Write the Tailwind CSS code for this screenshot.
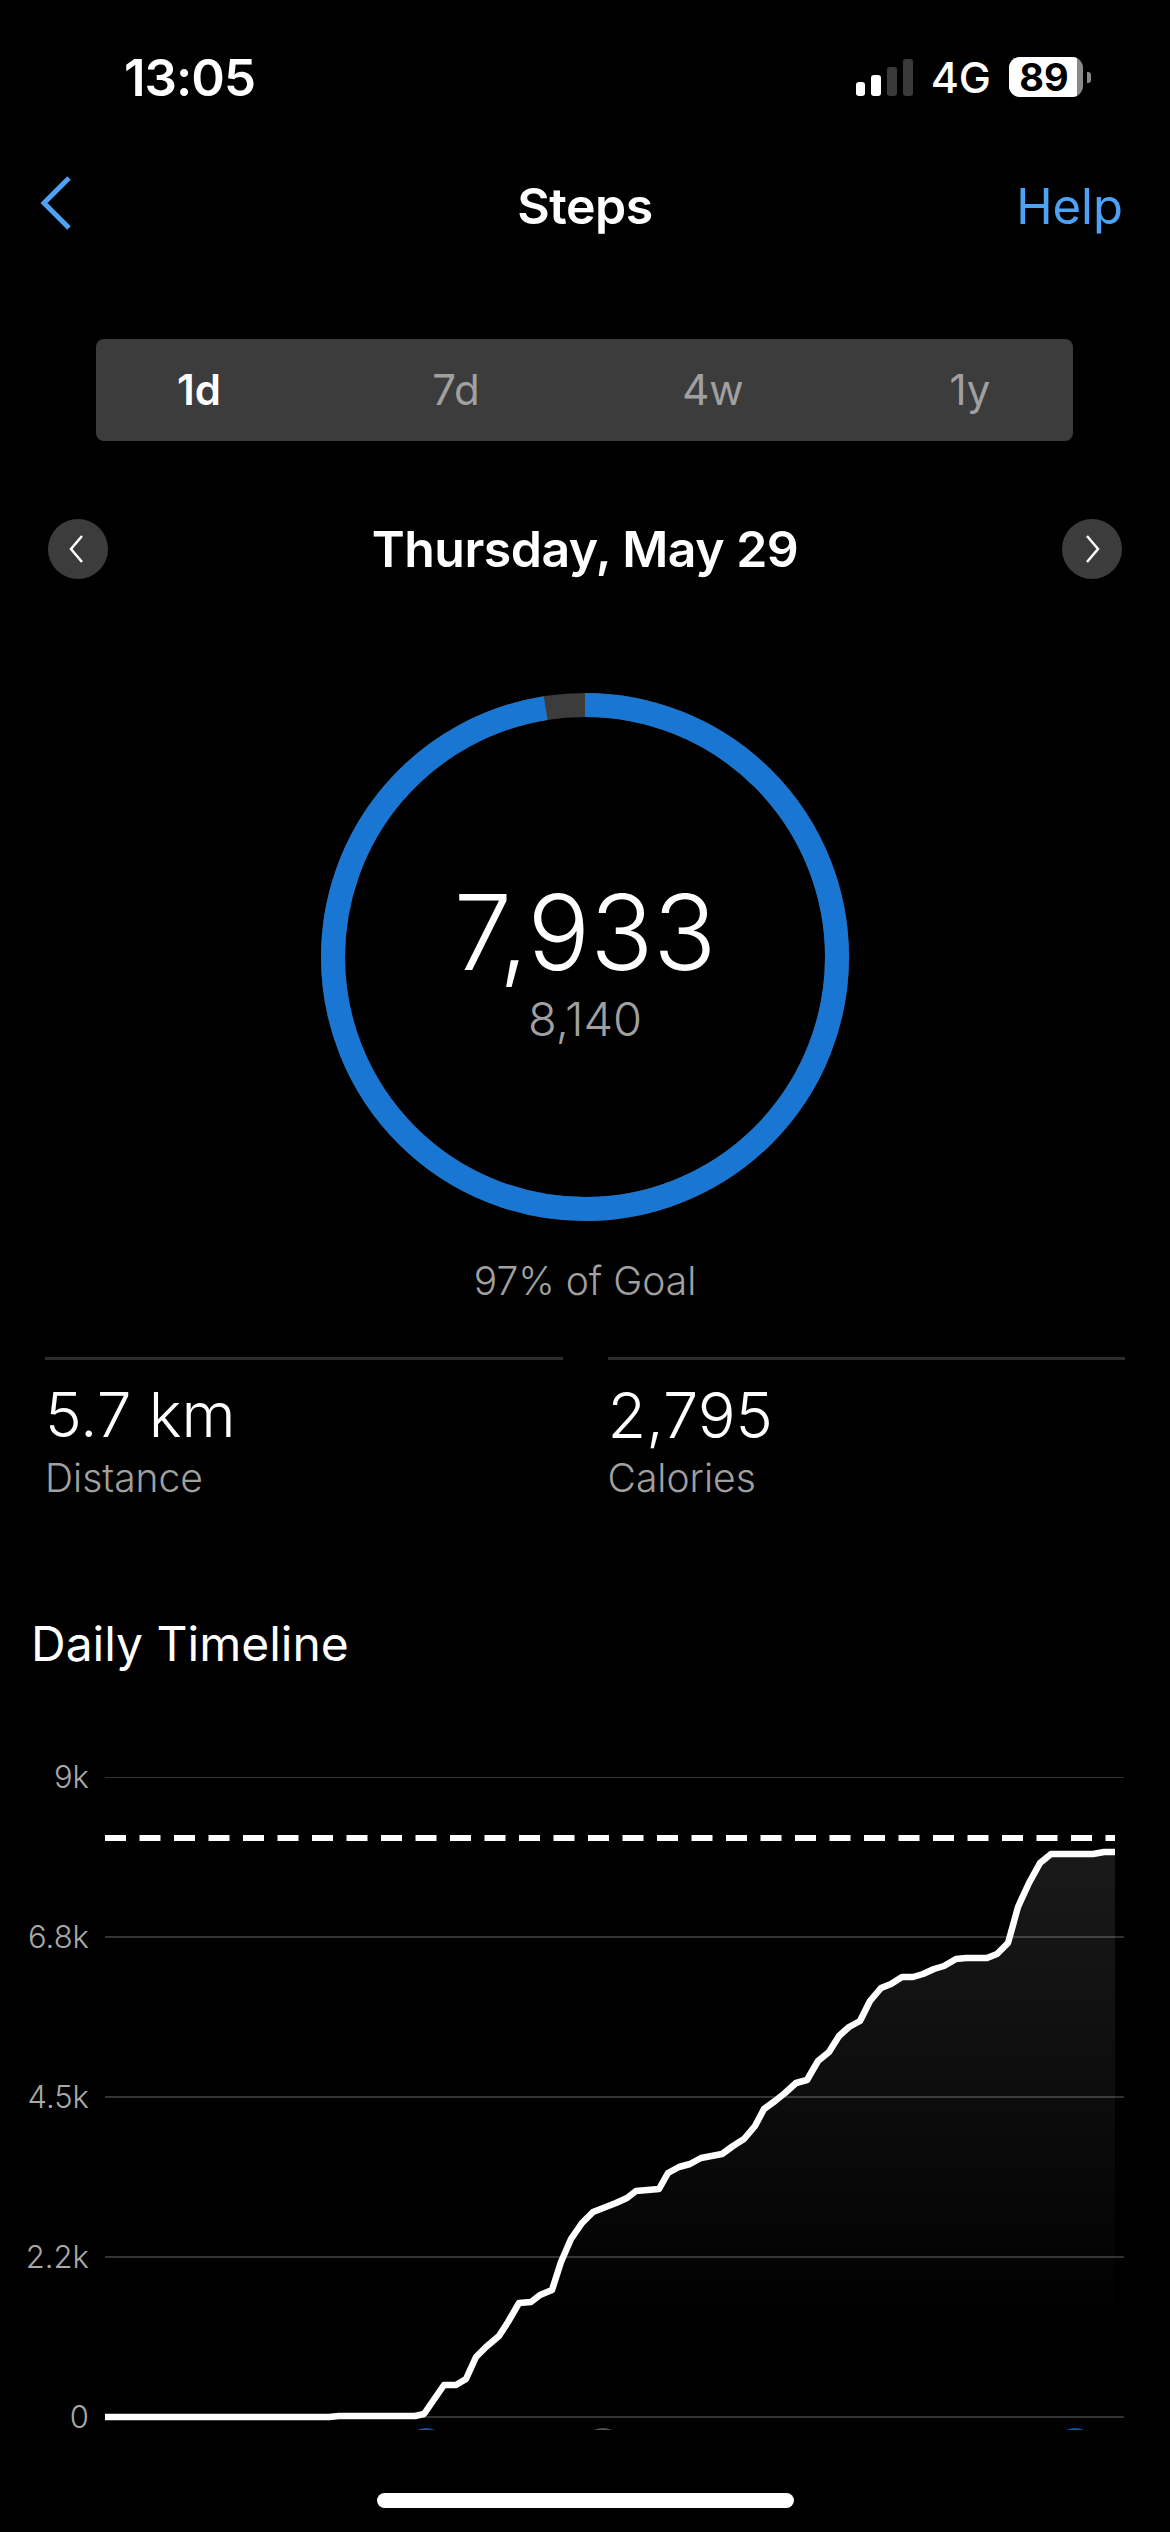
<!DOCTYPE html>
<html lang="en">
<head>
    <meta charset="UTF-8">
    <meta name="viewport" content="width=device-width, initial-scale=1.0">
    <script src="https://cdn.jsdelivr.net/npm/@tailwindcss/browser@4"></script>
    <title>Steps</title>
</head>
<body class="bg-black">
<div class="w-[1170px] h-[2532px] bg-black text-white font-['Inter',sans-serif] overflow-hidden antialiased relative">

    <!-- Status bar -->
    <div class="h-[154px] flex items-center justify-between pl-[124px] pr-[79px]">
        <div class="text-[51px] leading-none font-semibold tracking-[-1px]">13:05</div>
        <div class="flex items-center">
            <div class="flex items-end gap-[6px] h-[37px] mr-[18px]">
                <div class="w-[9px] h-[14px] bg-white rounded-[3px]"></div>
                <div class="w-[10px] h-[21px] bg-white rounded-[3px]"></div>
                <div class="w-[10px] h-[29px] bg-[#3a3a3a] rounded-[3px]"></div>
                <div class="w-[10px] h-[37px] bg-[#3a3a3a] rounded-[3px]"></div>
            </div>
            <div class="text-[43px] leading-none font-medium mr-[18px]">4G</div>
            <div class="flex items-center">
                <div class="w-[74px] h-[40px] rounded-[11px] bg-[#8a8a8a] overflow-hidden">
                    <div class="w-[68px] h-[40px] bg-white text-black text-[38px] leading-[40px] font-bold text-center pl-[2px]">89</div>
                </div>
                <div class="w-[4px] h-[11px] bg-[#8a8a8a] rounded-r-[3px] ml-[4px]"></div>
            </div>
        </div>
    </div>

    <!-- Nav -->
    <div class="relative h-[102px] flex items-center justify-center">
        <svg class="absolute left-[38px] top-[21px]" width="36" height="56" viewBox="0 0 36 56" fill="none">
            <path d="M31 3 L6 28 L31 53" stroke="#4da2f5" stroke-width="5"/>
        </svg>
        <div class="text-[50px] leading-none font-semibold tracking-[-0.5px] pt-[2px]">Steps</div>
        <div class="absolute right-[47px] top-[28px] text-[49px] leading-none text-[#4da2f5]">Help</div>
    </div>

    <!-- Range tabs -->
    <div class="mt-[83px] mx-[96px] w-[977px] h-[102px] bg-[#3c3c3c] rounded-[8px] flex items-center justify-center">
        <div class="w-[1028px] shrink-0 grid grid-cols-4 text-center text-[42px] leading-none text-[#a0a0a0]">
            <div class="font-semibold text-white">1d</div>
            <div>7d</div>
            <div>4w</div>
            <div>1y</div>
        </div>
    </div>

    <!-- Date row -->
    <div class="mt-[78px] px-[48px] h-[60px] flex items-center justify-between">
        <div class="w-[60px] h-[60px] rounded-full bg-[#3c3c3c] flex items-center justify-center">
            <svg width="20" height="28" viewBox="0 0 20 28" fill="none"><path d="M14 1 L3 14 L14 27" stroke="#fff" stroke-width="2.5"/></svg>
        </div>
        <div class="text-[50px] leading-none font-semibold tracking-[-0.5px]">Thursday, May 29</div>
        <div class="w-[60px] h-[60px] rounded-full bg-[#3c3c3c] flex items-center justify-center">
            <svg width="20" height="28" viewBox="0 0 20 28" fill="none"><path d="M5 1 L16 14 L5 27" stroke="#fff" stroke-width="2.5"/></svg>
        </div>
    </div>

    <!-- Ring -->
    <div class="relative mt-[114px] mx-auto w-[528px] h-[528px] flex flex-col items-center">
        <svg class="absolute inset-0" width="528" height="528" viewBox="0 0 528 528" fill="none">
            <circle cx="264" cy="264" r="252" stroke="#3c3c3c" stroke-width="24"/>
            <circle cx="264" cy="264" r="252" stroke="#1976d2" stroke-width="24" pathLength="360" stroke-dasharray="351 9" transform="rotate(-90 264 264)"/>
        </svg>
        <div class="mt-[187px] text-[104px] leading-none font-light">7,933</div>
        <div class="mt-[11px] text-[47px] leading-none font-light text-[#a0a0a0]">8,140</div>
    </div>

    <div class="mt-[40px] text-center text-[39px] leading-none font-light text-[#a0a0a0]">97% of Goal</div>

    <!-- Stats -->
    <div class="mt-[57px] px-[45px] grid grid-cols-2 gap-[45px]">
        <div class="border-t-[3px] border-[#2c2c2c] pt-[24px]">
            <div class="text-[62px] leading-none font-light">5.7 km</div>
            <div class="mt-[12px] text-[39px] leading-none font-light text-[#a0a0a0]">Distance</div>
        </div>
        <div class="border-t-[3px] border-[#2c2c2c] pt-[24px]">
            <div class="text-[63px] leading-none font-light">2,795</div>
            <div class="mt-[11px] text-[39px] leading-none font-light text-[#a0a0a0]">Calories</div>
        </div>
    </div>

    <div class="mt-[123px] pl-[31px] text-[48px] leading-none font-normal">Daily Timeline</div>

    <!-- Chart -->
    <div class="mt-[89px] flex h-[673px]">
        <div class="w-[89px] h-[680px] flex flex-col justify-between items-end text-[31px] font-light text-[#a8a8a8]">
            <div class="h-[40px] flex items-center">9k</div>
            <div class="h-[40px] flex items-center">6.8k</div>
            <div class="h-[40px] flex items-center">4.5k</div>
            <div class="h-[40px] flex items-center">2.2k</div>
            <div class="h-[40px] flex items-center">0</div>
        </div>
        <svg class="ml-[16px] mt-[20px]" width="1065" height="653" viewBox="105 1777 1065 653" fill="none">
            <defs>
                <linearGradient id="areaFill" x1="0" y1="1852" x2="0" y2="2330" gradientUnits="userSpaceOnUse">
                    <stop offset="0" stop-color="#fff" stop-opacity="0.1"/>
                    <stop offset="1" stop-color="#fff" stop-opacity="0"/>
                </linearGradient>
            </defs>
            <g stroke="#333" stroke-width="2">
                <line x1="105" y1="1777" x2="1124" y2="1777"/>
                <line x1="105" y1="1937" x2="1124" y2="1937"/>
                <line x1="105" y1="2097" x2="1124" y2="2097"/>
                <line x1="105" y1="2257" x2="1124" y2="2257"/>
                <line x1="105" y1="2417" x2="1124" y2="2417"/>
            </g>
            <path fill="url(#areaFill)" d="M105 2417 L329 2417 339 2416 415 2416 424 2414 444 2385 456 2385 466 2379 476 2357 486 2347 499 2336 508 2322 519 2303 531 2302 540 2295 552 2290 561 2262 571 2239 582 2223 593 2212 616 2203 627 2198 636 2191 659 2189 668 2173 679 2167 690 2164 701 2158 722 2154 733 2146 744 2139 755 2126 764 2109 775 2101 785 2093 796 2083 807 2080 818 2061 829 2052 839 2036 849 2027 860 2021 870 2001 881 1988 891 1984 902 1977 913 1977 923 1974 934 1969 944 1966 956 1959 966 1958 987 1958 997 1954 1008 1943 1018 1907 1029 1883 1040 1863 1051 1854 1093 1854 1104 1852 1115 1852 L1115 2417 Z"/>
            <polyline stroke="#fff" stroke-width="6.5" stroke-linejoin="round" points="105,2417 329,2417 339,2416 415,2416 424,2414 444,2385 456,2385 466,2379 476,2357 486,2347 499,2336 508,2322 519,2303 531,2302 540,2295 552,2290 561,2262 571,2239 582,2223 593,2212 616,2203 627,2198 636,2191 659,2189 668,2173 679,2167 690,2164 701,2158 722,2154 733,2146 744,2139 755,2126 764,2109 775,2101 785,2093 796,2083 807,2080 818,2061 829,2052 839,2036 849,2027 860,2021 870,2001 881,1988 891,1984 902,1977 913,1977 923,1974 934,1969 944,1966 956,1959 966,1958 987,1958 997,1954 1008,1943 1018,1907 1029,1883 1040,1863 1051,1854 1093,1854 1104,1852 1115,1852"/>
            <line x1="105" y1="1838" x2="1115" y2="1838" stroke="#fff" stroke-width="6" stroke-dasharray="21 13.5" stroke-dashoffset="0"/>
            <circle cx="426" cy="2448" r="20" fill="#0b55b5"/>
            <circle cx="603" cy="2448" r="20" fill="#555"/>
            <circle cx="1075" cy="2448" r="20" fill="#0b55b5"/>
        </svg>
    </div>

    <!-- Home indicator -->
    <div class="absolute left-[377px] top-[2493px] w-[417px] h-[15px] rounded-full bg-white"></div>
</div>
</body>
</html>
